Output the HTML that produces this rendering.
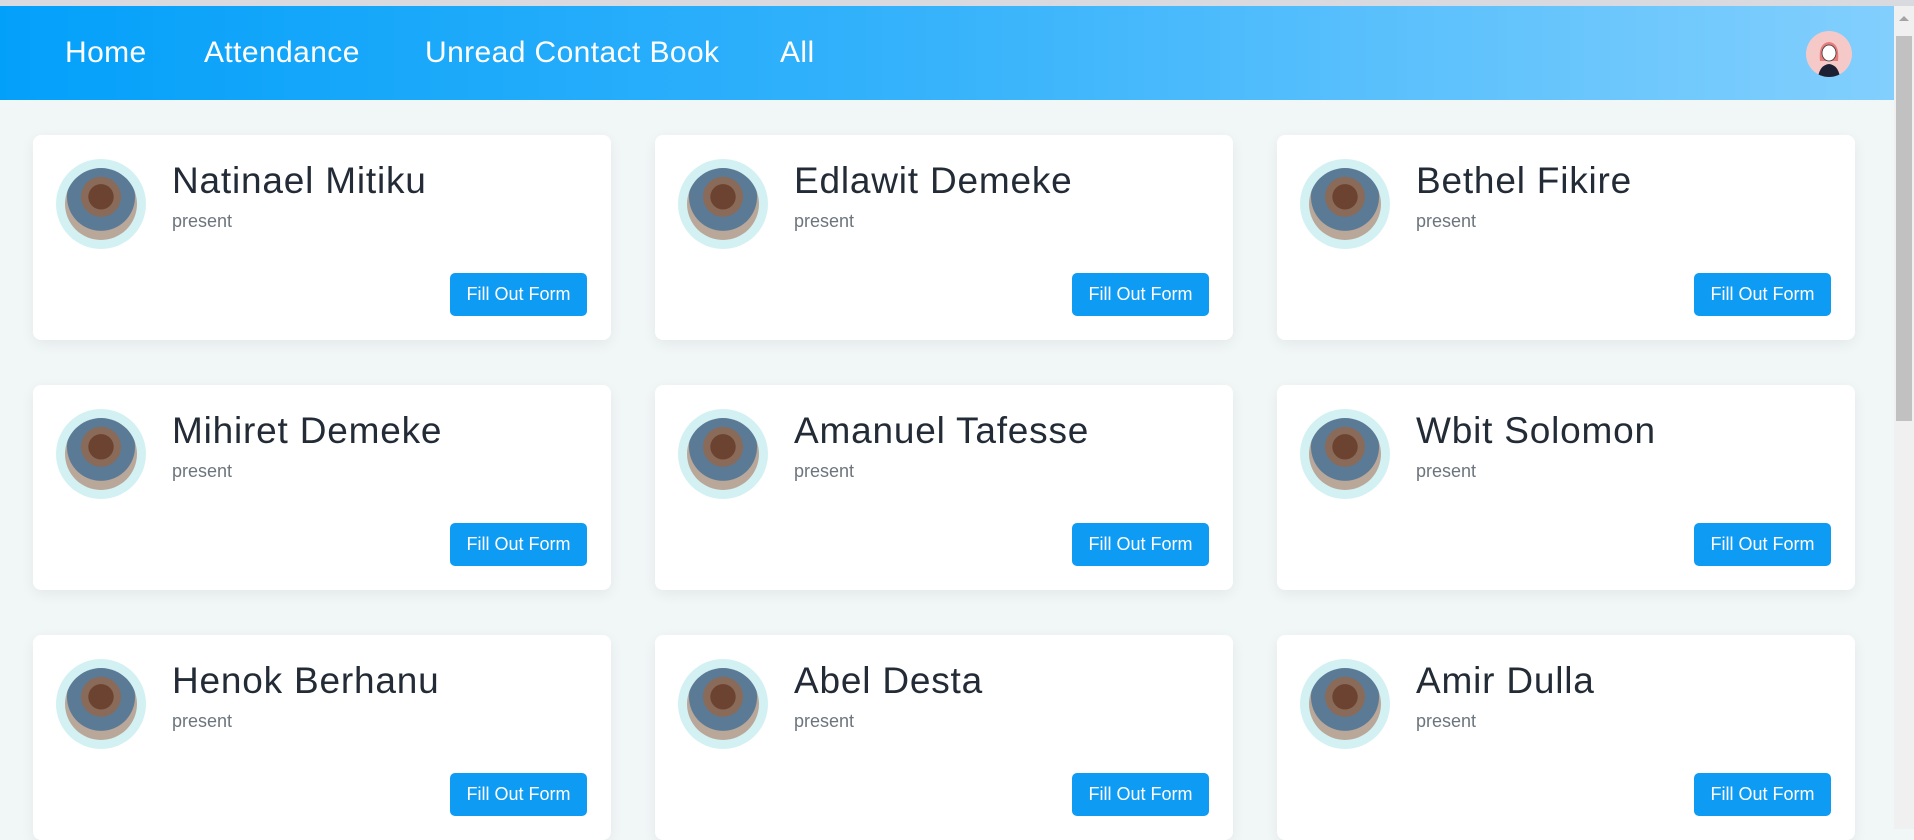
<!DOCTYPE html>
<html><head><style>
*{margin:0;padding:0;box-sizing:border-box}
body{width:1914px;height:829px;overflow:hidden;background:#f1f6f7;font-family:"Liberation Sans",sans-serif;position:relative}
.top{position:absolute;left:0;top:0;width:1914px;height:6px;background:#d9dadf}
.nav{position:absolute;left:0;top:6px;width:1894px;height:94px;background:linear-gradient(90deg,#03a0fa 0%,#37b3fb 50%,#82cffd 100%)}
.nav a{position:absolute;top:30px;color:#fff;font-size:30px;letter-spacing:.4px;text-decoration:none}
.sb{position:absolute;left:1894px;top:6px;width:20px;height:823px;background:#f0f0f0}
.sb .th{position:absolute;left:2px;top:30px;width:16px;height:385px;background:#c1c1c1}
.sb .ar{position:absolute;left:5px;top:10px;width:0;height:0;border-left:5px solid transparent;border-right:5px solid transparent;border-bottom:5px solid #a3a3a3}
.me{position:absolute;left:1806px;top:31px;width:46px;height:46px;border-radius:50%;background:#f6c9c9;overflow:hidden}
.card{position:absolute;width:578px;height:205px;background:#fff;border-radius:8px;box-shadow:0 4px 14px rgba(0,0,0,.06)}
.av{position:absolute;left:23px;top:24px;width:90px;height:90px;border-radius:50%;background:#d3f1f3}
.av i{position:absolute;left:9px;top:9px;width:72px;height:72px;border-radius:50%;background:radial-gradient(circle at 50% 40%,#6b4330 0 22%,#8a6a58 23% 35%,#5b7a96 36% 60%,#b9a89a 61%)}
.nm{position:absolute;left:139px;top:25px;font-size:37px;letter-spacing:.8px;color:#222b36}
.st{position:absolute;left:139px;top:76px;font-size:18px;color:#6c757d}
.bt{position:absolute;left:417px;top:138px;width:137px;height:43px;border-radius:5px;background:#0d9bf3;color:#fff;font-size:18px;text-align:center;line-height:43px}
</style></head><body>
<div class="top"></div>
<div class="nav">
<a style="left:65px">Home</a><a style="left:204px">Attendance</a><a style="left:425px">Unread Contact Book</a><a style="left:780px">All</a>
</div>
<div class="me"><svg width="46" height="46"><path d="M12 46 Q14 34 23 33 Q32 34 34 46Z" fill="#1d1f33"/><path d="M14 30 Q12 12 23 11 Q34 12 32 30Z" fill="#e77b7b"/><ellipse cx="23" cy="22" rx="7" ry="8" fill="#fff" stroke="#333" stroke-width=".8"/></svg></div>
<div class="sb"><div class="ar"></div><div class="th"></div></div>

<div class="card" style="left:33px;top:135px"><div class="av"><i></i></div><div class="nm">Natinael Mitiku</div><div class="st">present</div><div class="bt">Fill Out Form</div></div>
<div class="card" style="left:655px;top:135px"><div class="av"><i></i></div><div class="nm">Edlawit Demeke</div><div class="st">present</div><div class="bt">Fill Out Form</div></div>
<div class="card" style="left:1277px;top:135px"><div class="av"><i></i></div><div class="nm">Bethel Fikire</div><div class="st">present</div><div class="bt">Fill Out Form</div></div>

<div class="card" style="left:33px;top:385px"><div class="av"><i></i></div><div class="nm">Mihiret Demeke</div><div class="st">present</div><div class="bt">Fill Out Form</div></div>
<div class="card" style="left:655px;top:385px"><div class="av"><i></i></div><div class="nm">Amanuel Tafesse</div><div class="st">present</div><div class="bt">Fill Out Form</div></div>
<div class="card" style="left:1277px;top:385px"><div class="av"><i></i></div><div class="nm">Wbit Solomon</div><div class="st">present</div><div class="bt">Fill Out Form</div></div>

<div class="card" style="left:33px;top:635px"><div class="av"><i></i></div><div class="nm">Henok Berhanu</div><div class="st">present</div><div class="bt">Fill Out Form</div></div>
<div class="card" style="left:655px;top:635px"><div class="av"><i></i></div><div class="nm">Abel Desta</div><div class="st">present</div><div class="bt">Fill Out Form</div></div>
<div class="card" style="left:1277px;top:635px"><div class="av"><i></i></div><div class="nm">Amir Dulla</div><div class="st">present</div><div class="bt">Fill Out Form</div></div>
</body></html>
